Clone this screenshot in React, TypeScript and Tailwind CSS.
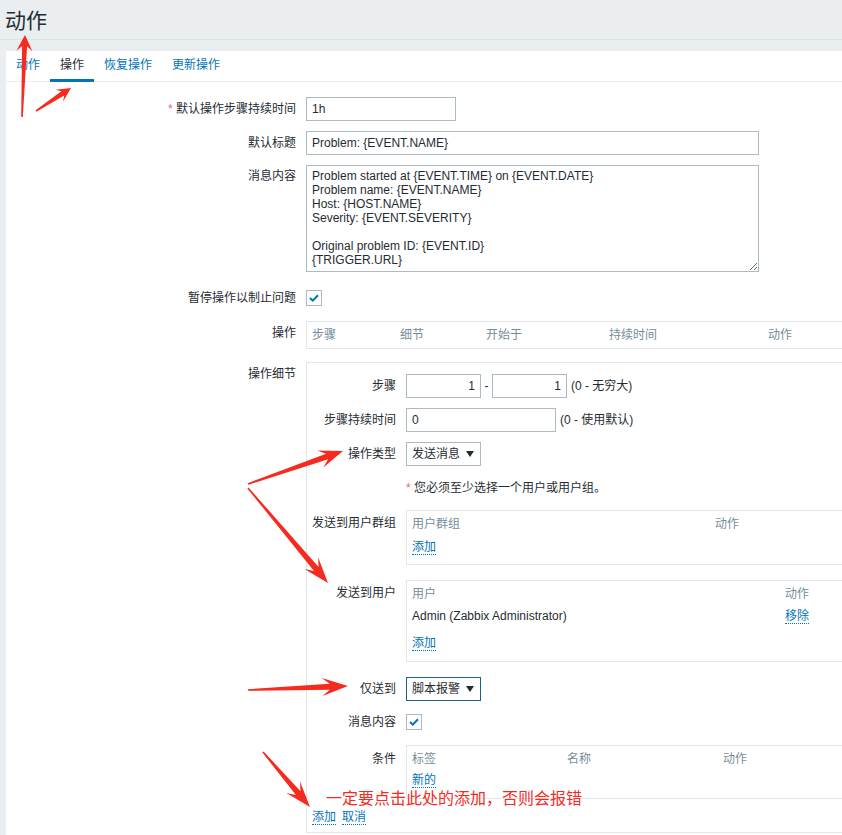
import React from "react";

type Pt = [number, number];

function arrowPoints(x1: number, y1: number, x2: number, y2: number, L: number, W: number, w: number, t: number): string {
  const dx = x2 - x1;
  const dy = y2 - y1;
  const len = Math.hypot(dx, dy);
  const ux = dx / len;
  const uy = dy / len;
  const nx = -uy;
  const ny = ux;
  const neckX = x2 - ux * L * 0.7;
  const neckY = y2 - uy * L * 0.7;
  const barbX = x2 - ux * L;
  const barbY = y2 - uy * L;
  const pts: Pt[] = [
    [x1 + nx * t, y1 + ny * t],
    [neckX + nx * w, neckY + ny * w],
    [barbX + nx * W, barbY + ny * W],
    [x2, y2],
    [barbX - nx * W, barbY - ny * W],
    [neckX - nx * w, neckY - ny * w],
    [x1 - nx * t, y1 - ny * t],
  ];
  return pts.map((p) => `${p[0].toFixed(1)},${p[1].toFixed(1)}`).join(" ");
}

const arrows: number[][] = [
  [22, 117, 25, 35, 16, 8, 2.5, 0.8],
  [36, 111, 71, 88, 14, 7, 2.5, 0.8],
  [248, 484, 343, 451, 24, 9, 3, 0.8],
  [248, 488, 328, 583, 26, 9, 3, 0.8],
  [248, 690, 348, 686, 26, 9, 3, 0.8],
  [263, 752, 310, 807, 26, 9, 3, 0.8],
];

const Link = ({ children }: { children: React.ReactNode }) => (
  <span className="text-[#0275b8] border-b border-dotted border-[#0275b8]">{children}</span>
);

const Check = () => (
  <div className="w-[16px] h-[16px] border border-[#acbbc2] bg-white flex items-center justify-center">
    <svg width="10" height="8" viewBox="0 0 10 8">
      <path d="M1 4 L3.8 6.6 L9 1.2" fill="none" stroke="#0275b8" strokeWidth="2" />
    </svg>
  </div>
);

const Caret = () => (
  <svg width="8" height="6" viewBox="0 0 8 6">
    <polygon points="0,0 8,0 4,6" fill="#1f2c33" />
  </svg>
);

const msg = `Problem started at {EVENT.TIME} on {EVENT.DATE}
Problem name: {EVENT.NAME}
Host: {HOST.NAME}
Severity: {EVENT.SEVERITY}

Original problem ID: {EVENT.ID}
{TRIGGER.URL}`;

export default function App() {
  return (
    <div className="relative w-[842px] h-[835px] overflow-hidden bg-[#ebeef0] font-['Liberation_Sans','Noto_Sans_CJK_SC',sans-serif] text-[12px] leading-[14px] text-[#1f2c33]">
      <div className="h-[40px] border-b border-[#dde2e5] pl-[5px] pt-[2px] flex items-center text-[21px] leading-[24px]">
        动作
      </div>
      <div className="mt-[11px] ml-[6px] bg-white h-[800px]">
        {/* tabs */}
        <div className="flex h-[31px] border-b border-[#ebeef0]">
          {[
            { t: "动作", a: false },
            { t: "操作", a: true },
            { t: "恢复操作", a: false },
            { t: "更新操作", a: false },
          ].map((tab) => (
            <div
              key={tab.t}
              className={
                "relative px-[10px] pb-[2px] flex items-center " +
                (tab.a ? "text-[#1f2c33]" : "text-[#0275b8]")
              }
            >
              {tab.t}
              {tab.a && <span className="absolute left-0 right-0 bottom-[-1px] h-[3px] bg-[#0275b8]" />}
            </div>
          ))}
        </div>

        <div className="pt-[15px]">
          {/* row 1 */}
          <div className="flex h-[24px] items-center">
            <div className="w-[290px] text-right">
              <span className="text-[#e06c6c]">*</span> 默认操作步骤持续时间
            </div>
            <div className="ml-[10px] w-[150px] h-[24px] border border-[#acbbc2] px-[5px] flex items-center">1h</div>
          </div>
          {/* row 2 */}
          <div className="flex h-[24px] items-center mt-[10px]">
            <div className="w-[290px] text-right">默认标题</div>
            <div className="ml-[10px] w-[453px] h-[24px] border border-[#acbbc2] px-[5px] flex items-center">
              Problem: {"{EVENT.NAME}"}
            </div>
          </div>
          {/* row 3 */}
          <div className="flex mt-[10px]">
            <div className="w-[290px] text-right pt-[4px]">消息内容</div>
            <textarea
              readOnly
              value={msg}
              className="ml-[10px] w-[453px] h-[107px] border border-[#acbbc2] px-[5px] pt-[3px] pb-0 resize overflow-hidden text-[12px] leading-[14px] text-[#1f2c33] font-['Liberation_Sans','Noto_Sans_CJK_SC',sans-serif] outline-none"
            />
          </div>
          {/* row 4 */}
          <div className="flex h-[24px] items-center mt-[14px]">
            <div className="w-[290px] text-right">暂停操作以制止问题</div>
            <div className="ml-[10px]">
              <Check />
            </div>
          </div>
          {/* row 5 */}
          <div className="flex mt-[11px]">
            <div className="w-[290px] text-right pt-[5px]">操作</div>
            <div className="ml-[10px] flex-1 h-[28px] border-y border-l border-[#e3e7ea] flex items-center pl-[5px] text-[#768d99]">
              <div className="w-[88px]">步骤</div>
              <div className="w-[86px]">细节</div>
              <div className="w-[123px]">开始于</div>
              <div className="w-[159px]">持续时间</div>
              <div>动作</div>
            </div>
          </div>
          {/* row 6 */}
          <div className="flex mt-[13px]">
            <div className="w-[290px] text-right pt-[5px]">操作细节</div>
            <div className="ml-[10px] flex-1 border-y border-l border-[#e3e7ea] pt-[11px] pb-[7px]">
              {/* 步骤 */}
              <div className="flex h-[24px] items-center">
                <div className="w-[89px] text-right">步骤</div>
                <div className="ml-[10px] w-[75px] h-[24px] border border-[#acbbc2] px-[5px] flex items-center justify-end">1</div>
                <div className="w-[11px] text-center">-</div>
                <div className="w-[75px] h-[24px] border border-[#acbbc2] px-[5px] flex items-center justify-end">1</div>
                <div className="ml-[4px]">(0 - 无穷大)</div>
              </div>
              {/* 步骤持续时间 */}
              <div className="flex h-[24px] items-center mt-[10px]">
                <div className="w-[89px] text-right">步骤持续时间</div>
                <div className="ml-[10px] w-[150px] h-[24px] border border-[#acbbc2] px-[5px] flex items-center">0</div>
                <div className="ml-[4px]">(0 - 使用默认)</div>
              </div>
              {/* 操作类型 */}
              <div className="flex h-[24px] items-center mt-[10px]">
                <div className="w-[89px] text-right">操作类型</div>
                <div className="ml-[10px] w-[75px] h-[24px] border border-[#acbbc2] pl-[5px] pr-[6px] flex items-center justify-between">
                  <span>发送消息</span>
                  <Caret />
                </div>
              </div>
              {/* note */}
              <div className="flex h-[20px] items-center mt-[12px]">
                <div className="w-[89px]" />
                <div className="ml-[10px]">
                  <span className="text-[#e06c6c]">*</span> 您必须至少选择一个用户或用户组。
                </div>
              </div>
              {/* 发送到用户群组 */}
              <div className="flex mt-[12px]">
                <div className="w-[89px] text-right pt-[6px] whitespace-nowrap">发送到用户群组</div>
                <div className="ml-[10px] flex-1 border-y border-l border-[#e3e7ea] pl-[5px] pt-[6px] pb-[10px]">
                  <div className="flex text-[#768d99]">
                    <div className="w-[303px]">用户群组</div>
                    <div>动作</div>
                  </div>
                  <div className="mt-[9px]">
                    <Link>添加</Link>
                  </div>
                </div>
              </div>
              {/* 发送到用户 */}
              <div className="flex mt-[15px]">
                <div className="w-[89px] text-right pt-[6px]">发送到用户</div>
                <div className="ml-[10px] flex-1 border-y border-l border-[#e3e7ea] pl-[5px] pt-[6px] pb-[11px]">
                  <div className="flex text-[#768d99]">
                    <div className="w-[373px]">用户</div>
                    <div>动作</div>
                  </div>
                  <div className="flex mt-[8px]">
                    <div className="w-[373px]">Admin (Zabbix Administrator)</div>
                    <div>
                      <Link>移除</Link>
                    </div>
                  </div>
                  <div className="mt-[13px]">
                    <Link>添加</Link>
                  </div>
                </div>
              </div>
              {/* 仅送到 */}
              <div className="flex h-[24px] items-center mt-[15px]">
                <div className="w-[89px] text-right">仅送到</div>
                <div className="ml-[10px] w-[75px] h-[24px] border border-[#1d5f93] pl-[5px] pr-[6px] flex items-center justify-between">
                  <span>脚本报警</span>
                  <Caret />
                </div>
              </div>
              {/* 消息内容 */}
              <div className="flex h-[24px] items-center mt-[9px]">
                <div className="w-[89px] text-right">消息内容</div>
                <div className="ml-[10px]">
                  <Check />
                </div>
              </div>
              {/* 条件 */}
              <div className="flex mt-[11px]">
                <div className="w-[89px] text-right pt-[7px]">条件</div>
                <div className="ml-[10px] flex-1 border-y border-l border-[#e3e7ea] pl-[5px] pt-[6px] pb-[11px]">
                  <div className="flex text-[#768d99]">
                    <div className="w-[155px]">标签</div>
                    <div className="w-[156px]">名称</div>
                    <div>动作</div>
                  </div>
                  <div className="mt-[7px]">
                    <Link>新的</Link>
                  </div>
                </div>
              </div>
              {/* buttons */}
              <div className="flex mt-[11px] pl-[5px] gap-[6px]">
                <Link>添加</Link>
                <Link>取消</Link>
              </div>
            </div>
          </div>
        </div>
      </div>

      {/* annotations */}
      <svg className="absolute left-0 top-0 pointer-events-none" width="842" height="835" viewBox="0 0 842 835">
        {arrows.map((a, i) => (
          <polygon key={i} points={arrowPoints(a[0], a[1], a[2], a[3], a[4], a[5], a[6], a[7])} fill="#f52b1f" />
        ))}
      </svg>
      <div className="absolute left-[326px] top-[788px] text-[16px] leading-[18px] text-[#f52b1f] font-['Noto_Sans_CJK_SC',sans-serif] whitespace-nowrap">
        一定要点击此处的添加，否则会报错
      </div>
    </div>
  );
}
